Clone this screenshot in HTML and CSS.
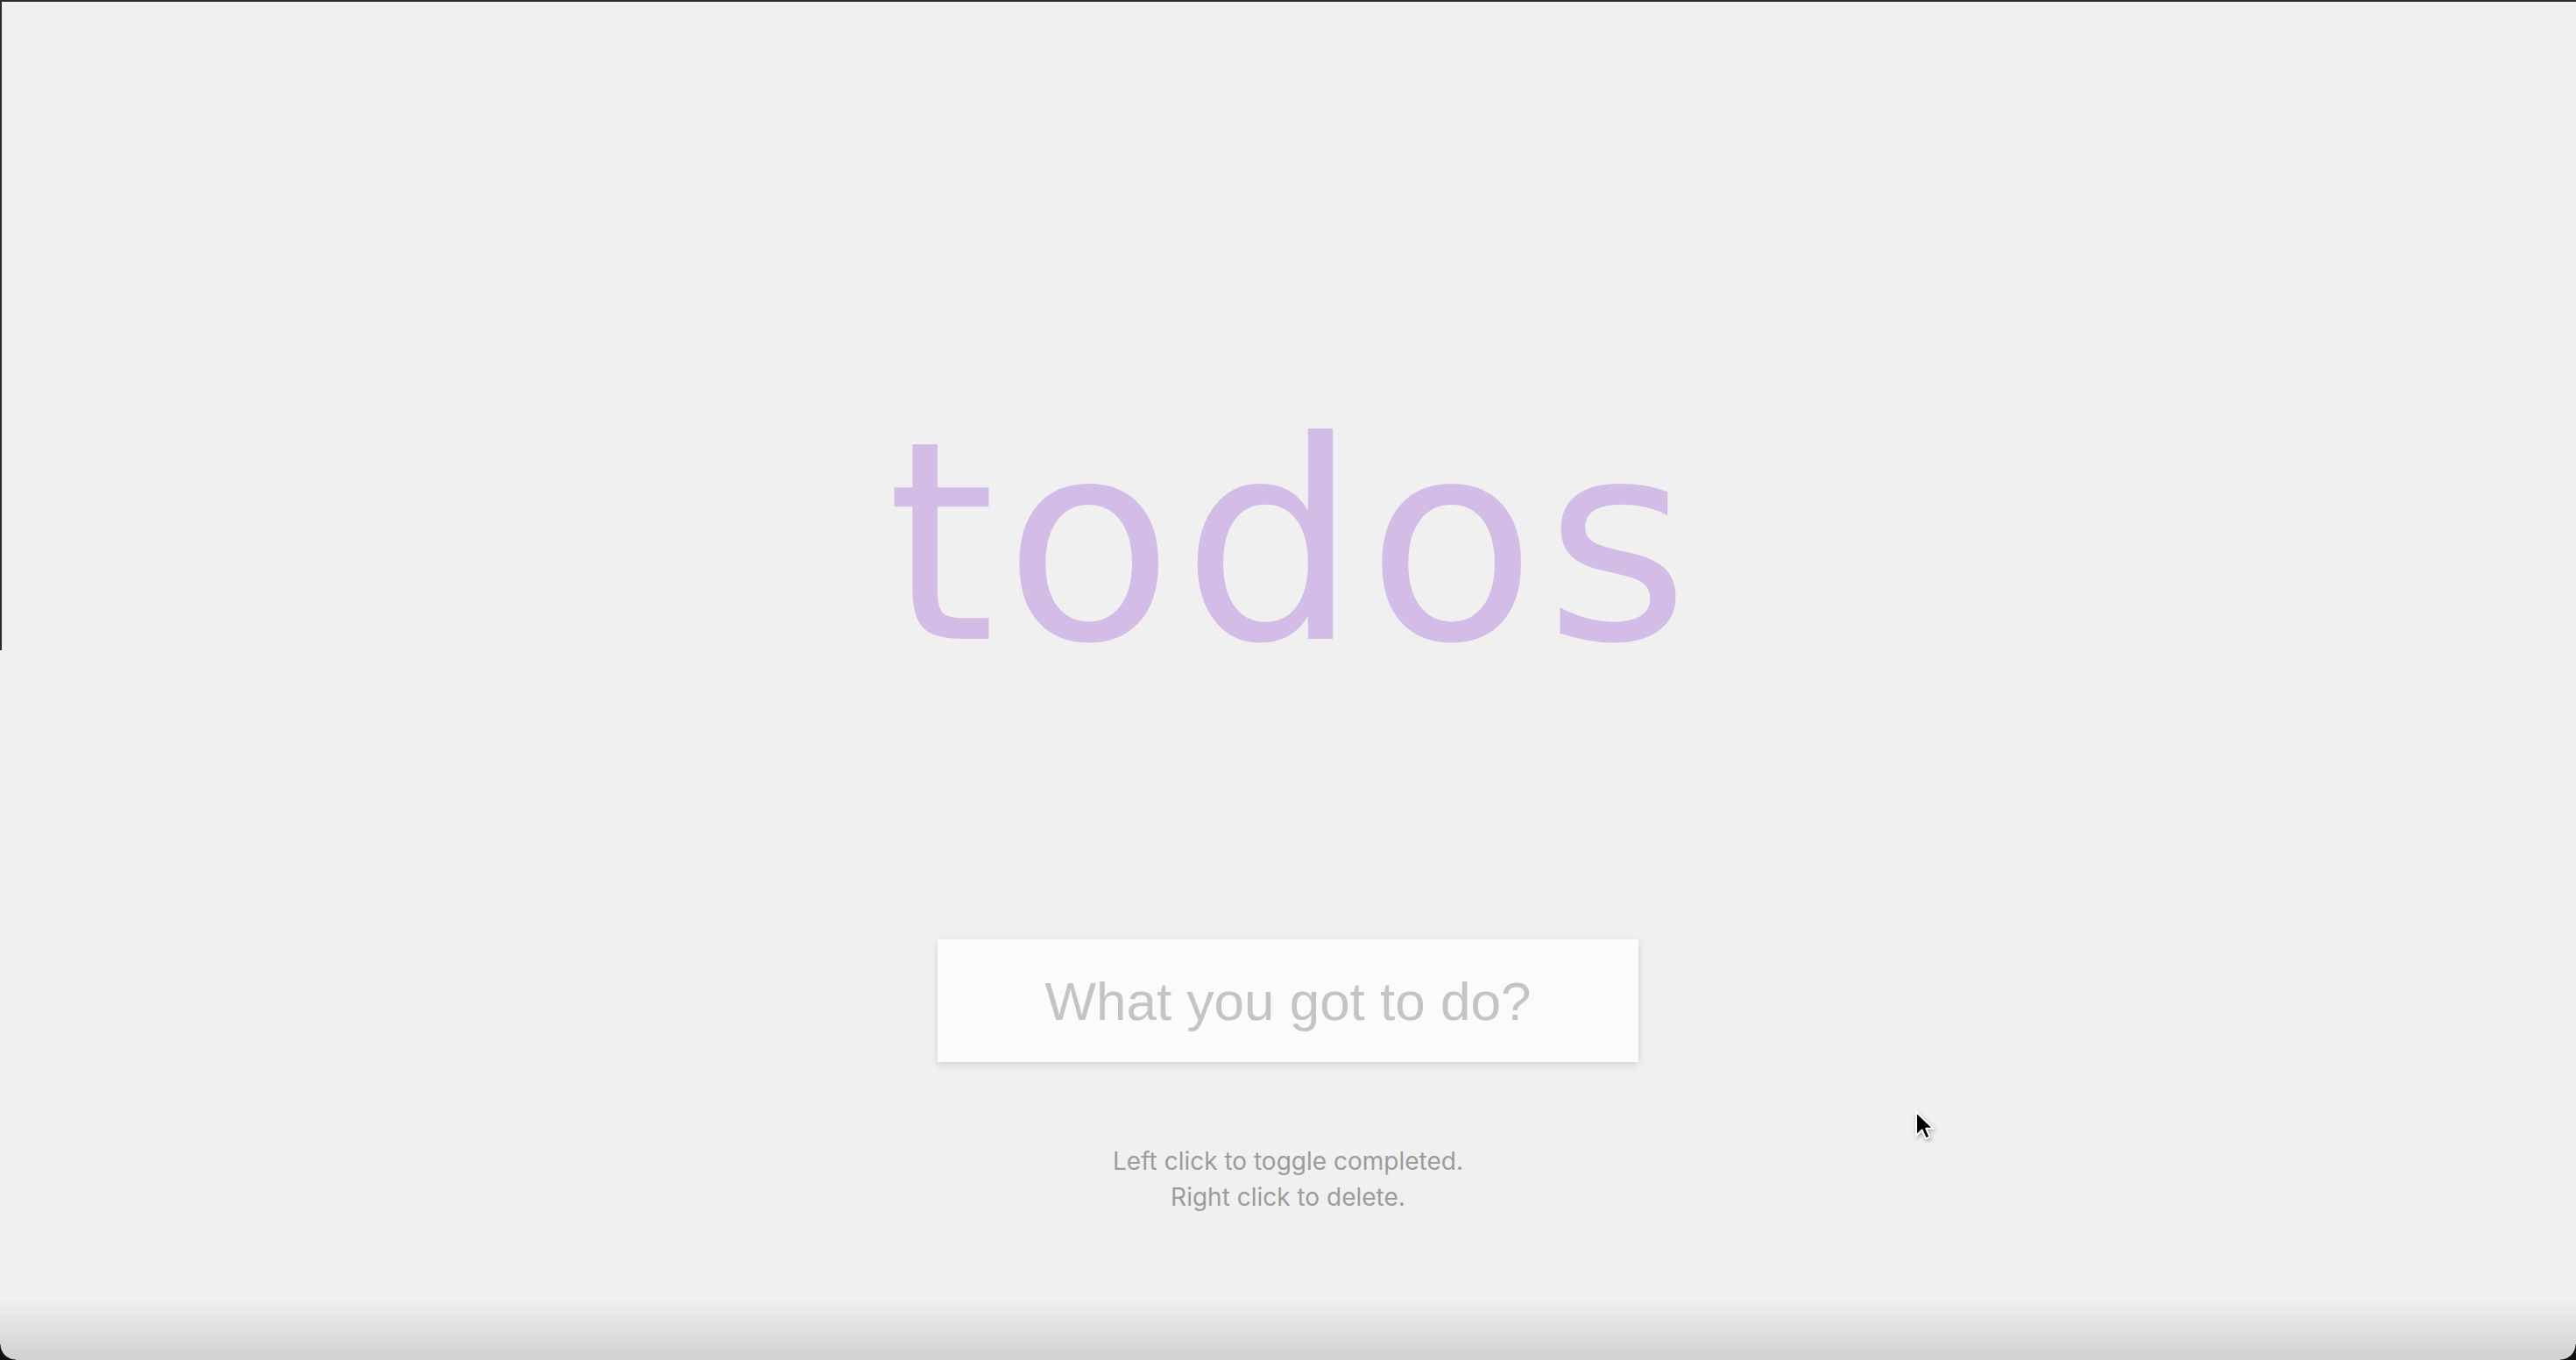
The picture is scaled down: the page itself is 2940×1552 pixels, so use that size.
FILE: index.html
```html
<!DOCTYPE html>
<html lang="en">
<head>
<meta charset="utf-8">
<title>todos</title>
<link rel="stylesheet" href="styles.css">
</head>
<body>
<main class="app">
  <h1 class="title">todos</h1>
  <form class="todo-form" onsubmit="return false">
    <input class="todo-input" type="text" placeholder="What you got to do?">
  </form>
  <p class="hint">Left click to toggle completed.<br>Right click to delete.</p>
</main>
<div class="frame">
  <div class="frame-shadow"></div>
  <div class="corner corner-left"></div>
  <div class="corner corner-right"></div>
</div>
<svg class="cursor" width="24" height="36" viewBox="0 0 24 36" aria-hidden="true">
  <path d="M2 2 L2 29 L8.5 22.5 L13 32.5 L17.5 30.5 L13.2 20.8 L21.5 20.8 Z" fill="#000" stroke="#fff" stroke-width="2" stroke-linejoin="round"/>
</svg>
</body>
</html>
```

FILE: styles.css
```css
html, body {
  margin: 0;
  padding: 0;
  height: 100%;
}

body {
  background-color: #f1f0f1;
  font-family: "Inter", "Liberation Sans", sans-serif;
  overflow: hidden;
}

.app {
  display: flex;
  flex-direction: column;
  align-items: center;
  padding-top: 462px;
}

.title {
  margin: 0;
  padding-left: 10px;
  font-family: "DejaVu Sans", "Inter", sans-serif;
  font-weight: 400;
  font-size: 316px;
  line-height: 316px;
  letter-spacing: 10px;
  color: #d3bde6;
}

.todo-form {
  margin-top: 294px;
}

.todo-input {
  display: block;
  box-sizing: border-box;
  width: 800px;
  height: 140px;
  border: none;
  outline: none;
  background: #fbfbfa;
  box-shadow: 0 3px 9px rgba(0, 0, 0, 0.13);
  font-family: "Liberation Sans", Arial, sans-serif;
  font-size: 62px;
  color: #555;
  text-align: center;
  padding: 0 20px;
}

.todo-input::placeholder {
  color: #c4c4c4;
}

.hint {
  margin: 93px 0 0;
  font-family: "Inter", "Lato", sans-serif;
  font-size: 28px;
  line-height: 41px;
  color: #9c9c9c;
  text-align: center;
}

.frame {
  position: fixed;
  inset: 0;
  pointer-events: none;
  border-top: 2px solid #2a2a2a;
}

.frame::before {
  content: "";
  position: absolute;
  left: 0;
  top: 0;
  width: 2px;
  height: 740px;
  background: #2a2a2a;
}

.frame-shadow {
  position: absolute;
  left: 0;
  right: 0;
  bottom: 0;
  height: 70px;
  background: linear-gradient(to bottom, rgba(0, 0, 0, 0), rgba(0, 0, 0, 0.13));
}

.corner {
  position: absolute;
  bottom: 0;
  width: 18px;
  height: 18px;
}

.corner-left {
  left: 0;
  background: radial-gradient(circle at 100% 0, transparent 17px, #111 18px);
}

.corner-right {
  right: 0;
  background: radial-gradient(circle at 0 0, transparent 17px, #111 18px);
}

.cursor {
  position: fixed;
  left: 2185px;
  top: 1267px;
  filter: drop-shadow(1px 2px 2px rgba(0, 0, 0, 0.3));
}
```
